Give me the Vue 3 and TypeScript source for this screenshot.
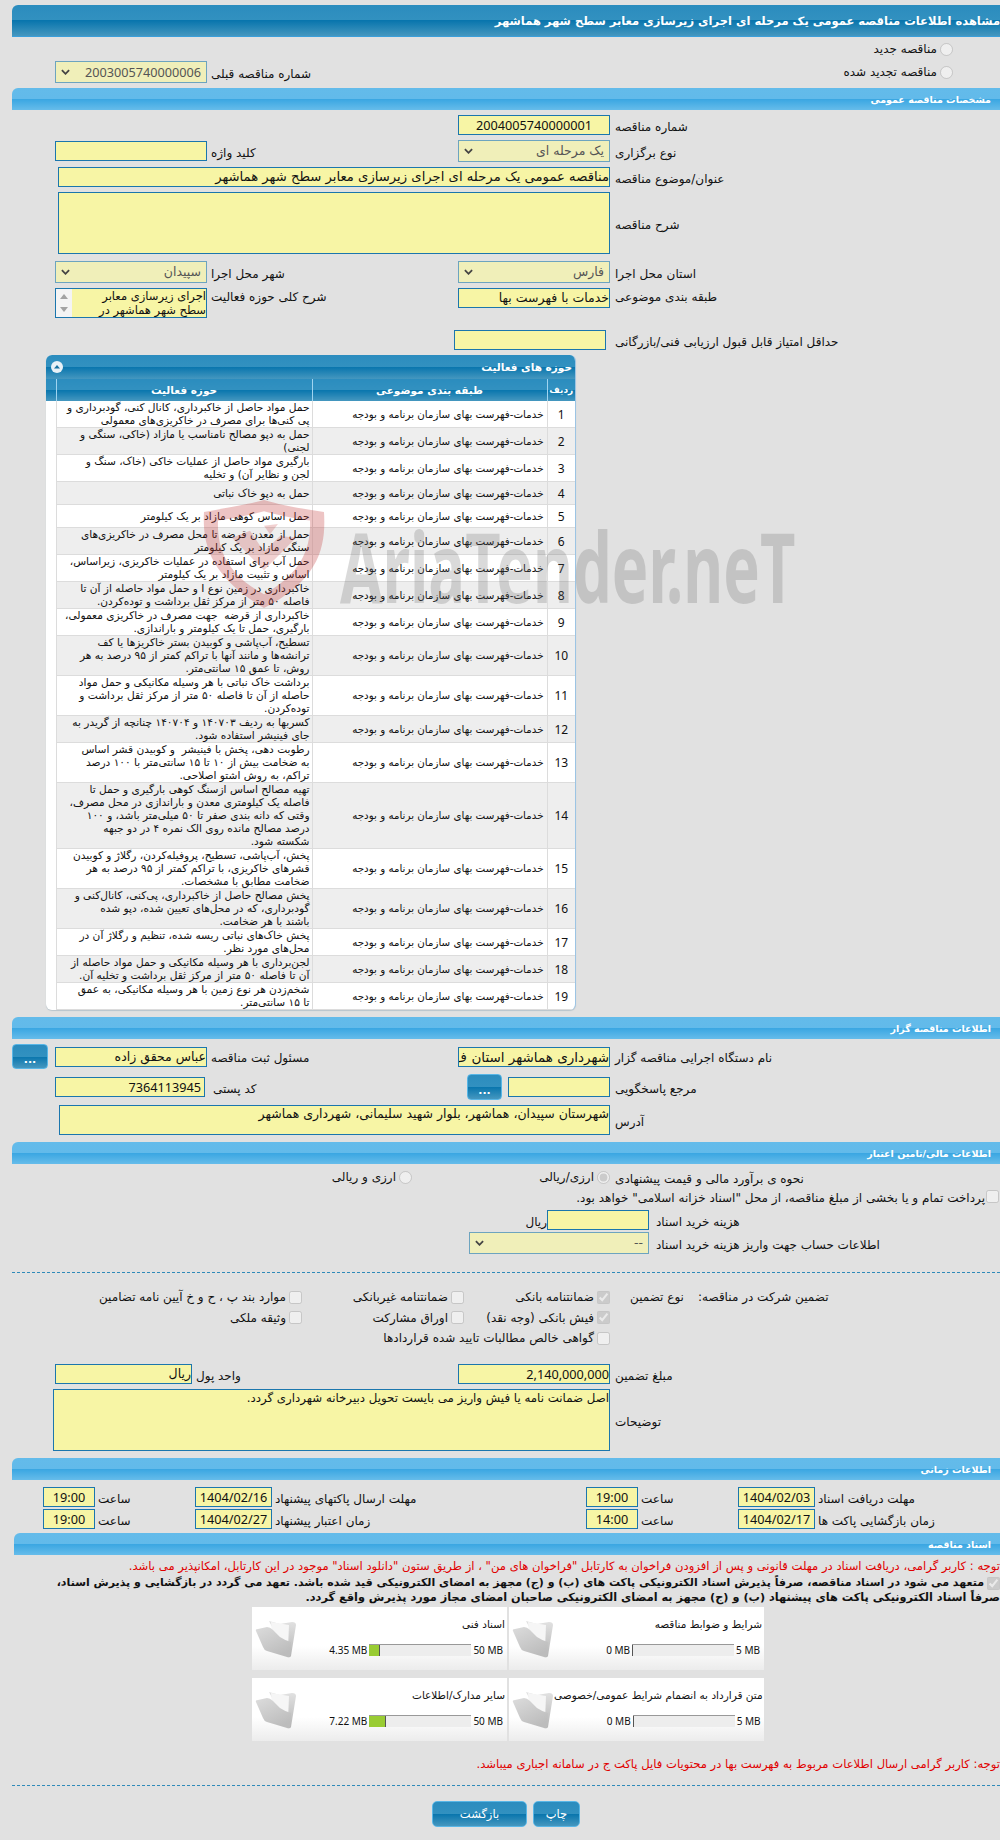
<script setup lang="ts">
const W = 'خدمات-فهرست بهای سازمان برنامه و بودجه'
const rows: string[] = [
  'حمل مواد حاصل از خاکبرداری، کانال کنی، گودبرداری و\nپی کنی‌ها برای مصرف در خاکریزی‌های معمولی',
  'حمل به دپو مصالح نامناسب یا مازاد (خاکی، سنگی و\nلجنی)',
  'بارگیری مواد حاصل از عملیات خاکی (خاک، سنگ و\nلجن و نظایر آن) و تخلیه',
  'حمل به دپو خاک نباتی',
  'حمل اساس کوهی مازاد بر یک کیلومتر',
  'حمل از معدن قرضه تا محل مصرف در خاکریزی‌های\nسنگی مازاد بر یک کیلومتر',
  'حمل آب برای استفاده در عملیات خاکریزی، زیراساس،\nاساس و تثبیت مازاد بر یک کیلومتر',
  'خاکبرداری در زمین نوع I و حمل مواد حاصله از آن تا\nفاصله ۵۰ متر از مرکز ثقل برداشت و توده‌کردن.',
  'خاکبرداری از قرضه  جهت مصرف در خاکریزی معمولی،\nبارگیری، حمل تا یک کیلومتر و باراندازی.',
  'تسطیح، آب‌پاشی و کوبیدن بستر خاکریزها یا کف\nترانشه‌ها و مانند آنها با تراکم کمتر از ۹۵ درصد به هر\nروش، تا عمق ۱۵ سانتی‌متر.',
  'برداشت خاک نباتی با هر وسیله مکانیکی و حمل مواد\nحاصله از آن تا فاصله ۵۰ متر از مرکز ثقل برداشت و\nتوده‌کردن.',
  'کسربها به ردیف ۱۴۰۷۰۳ و ۱۴۰۷۰۴ چنانچه از گریدر به\nجای فینیشر استفاده شود.',
  'رطوبت دهی، پخش با فینیشر  و کوبیدن قشر اساس\nبه ضخامت بیش از ۱۰ تا ۱۵ سانتی‌متر با ۱۰۰ درصد\nتراکم، به روش اشتو اصلاحی.',
  'تهیه مصالح اساس ازسنگ کوهی بارگیری و حمل تا\nفاصله یک کیلومتری معدن و باراندازی در محل مصرف،\nوقتی که دانه بندی صفر تا ۵۰ میلی‌متر باشد، و ۱۰۰\nدرصد مصالح مانده روی الک نمره ۴ در دو جبهه\nشکسته شود.',
  'پخش، آب‌پاشی، تسطیح، پروفیله‌کردن، رگلاژ و کوبیدن\nقشرهای خاکریزی، با تراکم کمتر از ۹۵ درصد به هر\nضخامت مطابق با مشخصات.',
  'پخش مصالح حاصل از خاکبرداری، پی‌کنی، کانال‌کنی و\nگودبرداری، که در محل‌های تعیین شده، دپو شده\nباشند با هر ضخامت.',
  'پخش خاک‌های نباتی ریسه شده، تنظیم و رگلاژ آن در\nمحل‌های مورد نظر.',
  'لجن‌برداری با هر وسیله مکانیکی و حمل مواد حاصله از\nآن تا فاصله ۵۰ متر از مرکز ثقل برداشت و تخلیه آن.',
  'شخم‌زدن هر نوع زمین با هر وسیله مکانیکی، به عمق\nتا ۱۵ سانتی‌متر.'
]
const files = [
  [
    { t: 'اسناد فنی', used: '4.35 MB', max: '50 MB', pct: 10 },
    { t: 'شرایط و ضوابط مناقصه', used: '0 MB', max: '5 MB', pct: 0 }
  ],
  [
    { t: 'سایر مدارک/اطلاعات', used: '7.22 MB', max: '50 MB', pct: 16 },
    { t: 'متن قرارداد به انضمام شرایط عمومی/خصوصی', used: '0 MB', max: '5 MB', pct: 0 }
  ]
]
</script>

<template>
  <div class="page">
    <div class="bar dark main"><span dir="rtl">مشاهده اطلاعات مناقصه عمومی یک مرحله ای اجرای زیرسازی معابر سطح شهر هماشهر</span></div>

    <div class="row rad1">
      <label class="opt" dir="rtl"><input type="radio" disabled name="a" /><span>مناقصه جدید</span></label>
    </div>
    <div class="row rad2">
      <div class="left">
        <div class="sel w152"><svg class="chev" viewBox="0 0 10 6"><path d="M1 1l4 4 4-4" /></svg><span class="num">2003005740000006</span></div>
        <div class="lbl ml4" dir="rtl">شماره مناقصه قبلی</div>
      </div>
      <label class="opt opt2" dir="rtl"><input type="radio" disabled name="a" /><span>مناقصه تجدید شده</span></label>
    </div>

    <div class="bar light mt5"><span dir="rtl">مشخصات مناقصه عمومی</span></div>

    <div class="row mt5 form">
      <div class="left"></div>
      <div class="inp w152 num c" dir="ltr">2004005740000001</div>
      <div class="lbl ml5" dir="rtl">شماره مناقصه</div>
    </div>
    <div class="row mt5 form">
      <div class="left">
        <div class="inp w152"></div>
        <div class="lbl ml4" dir="rtl">کلید واژه</div>
      </div>
      <div class="sel w152"><svg class="chev" viewBox="0 0 10 6"><path d="M1 1l4 4 4-4" /></svg><span dir="rtl">یک مرحله ای</span></div>
      <div class="lbl ml5" dir="rtl">نوع برگزاری</div>
    </div>
    <div class="row mt5 form0">
      <div class="inp w552 big" dir="rtl">مناقصه عمومی یک مرحله ای اجرای زیرسازی معابر سطح شهر هماشهر</div>
      <div class="lbl ml5" dir="rtl">عنوان/موضوع مناقصه</div>
    </div>
    <div class="row mt5 form0 mid">
      <div class="inp w552 h62"></div>
      <div class="lbl ml5" dir="rtl">شرح مناقصه</div>
    </div>
    <div class="row mt7 form">
      <div class="left">
        <div class="sel w152"><svg class="chev" viewBox="0 0 10 6"><path d="M1 1l4 4 4-4" /></svg><span dir="rtl">سپیدان</span></div>
        <div class="lbl ml4" dir="rtl">شهر محل اجرا</div>
      </div>
      <div class="sel w152"><svg class="chev" viewBox="0 0 10 6"><path d="M1 1l4 4 4-4" /></svg><span dir="rtl">فارس</span></div>
      <div class="lbl ml5" dir="rtl">استان محل اجرا</div>
    </div>
    <div class="row mt5 form top">
      <div class="left">
        <div class="listbox w152" dir="rtl">
          <div class="lb-text">اجرای زیرسازی معابر<br />سطح شهر هماشهر در</div>
          <div class="lb-scroll"><i class="up"></i><i class="down"></i></div>
        </div>
        <div class="lbl ml4 lblt" dir="rtl">شرح کلی حوزه فعالیت</div>
      </div>
      <div class="inp w152" dir="rtl">خدمات با فهرست بها</div>
      <div class="lbl ml5 lblt" dir="rtl">طبقه بندی موضوعی</div>
    </div>
    <div class="row mt12 form-min">
      <div class="inp w152"></div>
      <div class="lbl minlbl" dir="rtl">حداقل امتیاز قابل قبول ارزیابی فنی/بازرگانی</div>
    </div>

    <div class="card mt5">
      <div class="card-head">
        <span class="toggle"><svg viewBox="0 0 12 12"><circle cx="6" cy="6" r="6" fill="#e8f1f7" /><path d="M3 7.4L6 4l3 3.4z" fill="#17709f" /></svg></span>
        <span dir="rtl">حوزه های فعالیت</span>
      </div>
      <table dir="ltr">
        <colgroup><col class="c0" /><col class="c1" /><col class="c2" /><col class="c3" /></colgroup>
        <thead>
          <tr><th></th><th dir="rtl">حوزه فعالیت</th><th dir="rtl">طبقه بندی موضوعی</th><th class="th-idx" dir="rtl">ردیف</th></tr>
        </thead>
        <tbody>
          <tr v-for="(r, i) in rows" :key="i" :class="{ alt: i % 2 === 1 }">
            <td class="blank"></td>
            <td class="act" dir="rtl">{{ r }}</td>
            <td class="cat" dir="rtl">{{ W }}</td>
            <td class="idx">{{ i + 1 }}</td>
          </tr>
        </tbody>
      </table>
    </div>

    <div class="bar light mt7"><span dir="rtl">اطلاعات مناقصه گزار</span></div>

    <div class="row mt5 btnrow">
      <div class="left wide-left">
        <button class="dots d1">...</button>
        <div class="inp w152 ml7" dir="rtl">عباس محقق زاده</div>
        <div class="lbl ml4" dir="rtl">مسئول ثبت مناقصه</div>
      </div>
      <div class="inp w152 clip" dir="rtl">شهرداری هماشهر استان ف</div>
      <div class="lbl ml5" dir="rtl">نام دستگاه اجرایی مناقصه گزار</div>
    </div>
    <div class="row mt5 btnrow h26">
      <div class="left post">
        <div class="inp w150 num2" dir="ltr">7364113945</div>
        <div class="lbl ml8" dir="rtl">کد پستی</div>
      </div>
      <button class="dots d2">...</button>
      <div class="inp w102"></div>
      <div class="lbl ml5" dir="rtl">مرجع پاسخگویی</div>
    </div>
    <div class="row mt5 addr mid">
      <div class="inp w551 h30 tall" dir="rtl">شهرستان سپیدان، هماشهر، بلوار شهید سلیمانی، شهرداری هماشهر</div>
      <div class="lbl ml5" dir="rtl">آدرس</div>
    </div>

    <div class="bar light mt7"><span dir="rtl">اطلاعات مالی/تامین اعتبار</span></div>

    <div class="row finr">
      <label class="opt o3" dir="rtl"><input type="radio" disabled name="b" /><span>ارزی و ریالی</span></label>
      <label class="opt o4" dir="rtl"><input type="radio" disabled checked name="b" /><span>ارزی/ریالی</span></label>
      <div class="lbl ml5" dir="rtl">نحوه ی برآورد مالی و قیمت پیشنهادی</div>
    </div>
    <div class="row chk1" dir="rtl">
      <input type="checkbox" disabled />
      <span class="lbl">پرداخت تمام و یا بخشی از مبلغ مناقصه، از محل "اسناد خزانه اسلامی" خواهد بود.</span>
    </div>
    <div class="row cost">
      <div class="lbl" dir="rtl">ریال</div>
      <div class="inp w102"></div>
      <div class="lbl ml7" dir="rtl">هزینه خرید اسناد</div>
    </div>
    <div class="row mt2 acc">
      <div class="sel w180"><svg class="chev" viewBox="0 0 10 6"><path d="M1 1l4 4 4-4" /></svg><span dir="rtl">--</span></div>
      <div class="lbl ml7" dir="rtl">اطلاعات حساب جهت واریز هزینه خرید اسناد</div>
    </div>

    <div class="dash d-a"></div>

    <div class="guar">
      <div class="guar-grid" dir="rtl">
        <label class="ck"><input type="checkbox" disabled checked /><span>ضمانتنامه بانکی</span></label>
        <label class="ck"><input type="checkbox" disabled /><span>ضمانتنامه غیربانکی</span></label>
        <label class="ck"><input type="checkbox" disabled /><span>موارد بند پ ، ح و خ آیین نامه تضامین</span></label>
        <label class="ck"><input type="checkbox" disabled checked /><span>فیش بانکی (وجه نقد)</span></label>
        <label class="ck"><input type="checkbox" disabled /><span>اوراق مشارکت</span></label>
        <label class="ck"><input type="checkbox" disabled /><span>وثیقه ملکی</span></label>
        <label class="ck wide"><input type="checkbox" disabled /><span>گواهی خالص مطالبات تایید شده قراردادها</span></label>
      </div>
      <div class="lbl g1" dir="rtl">نوع تضمین</div>
      <div class="lbl g2" dir="rtl">تضمین شرکت در مناقصه:</div>
    </div>

    <div class="row form amt">
      <div class="left">
        <div class="inp w137" dir="rtl">ریال</div>
        <div class="lbl ml4" dir="rtl">واحد پول</div>
      </div>
      <div class="inp w152 num3" dir="ltr">2,140,000,000</div>
      <div class="lbl ml5" dir="rtl">مبلغ تضمین</div>
    </div>
    <div class="row mt5 desc mid">
      <div class="inp w557 h62 tall small" dir="rtl">اصل ضمانت نامه یا فیش واریز می بایست تحویل دبیرخانه شهرداری گردد.</div>
      <div class="lbl ml5" dir="rtl">توضیحات</div>
    </div>

    <div class="bar light mt7"><span dir="rtl">اطلاعات زمانی</span></div>

    <div class="times t1">
      <div class="inp num4 c" dir="ltr">19:00</div><div class="lbl ml3" dir="rtl">ساعت</div>
      <div class="inp num4 c" dir="ltr">1404/02/16</div><div class="lbl ml3" dir="rtl">مهلت ارسال پاکتهای پیشنهاد</div>
      <div class="inp num4 c" dir="ltr">19:00</div><div class="lbl ml3" dir="rtl">ساعت</div>
      <div class="inp num4 c" dir="ltr">1404/02/03</div><div class="lbl ml3" dir="rtl">مهلت دریافت اسناد</div>
    </div>
    <div class="times t2">
      <div class="inp num4 c" dir="ltr">19:00</div><div class="lbl ml3" dir="rtl">ساعت</div>
      <div class="inp num4 c" dir="ltr">1404/02/27</div><div class="lbl ml3" dir="rtl">زمان اعتبار پیشنهاد</div>
      <div class="inp num4 c" dir="ltr">14:00</div><div class="lbl ml3" dir="rtl">ساعت</div>
      <div class="inp num4 c" dir="ltr">1404/02/17</div><div class="lbl ml3" dir="rtl">زمان بازگشایی پاکت ها</div>
    </div>

    <div class="bar light docs"><span dir="rtl">اسناد مناقصه</span></div>

    <div class="red n1" dir="rtl">توجه : کاربر گرامی، دریافت اسناد در مهلت قانونی و پس از افزودن فراخوان به کارتابل "فراخوان های من" ، از طریق ستون "دانلود اسناد" موجود در این کارتابل، امکانپذیر می باشد.</div>
    <div class="pledge" dir="rtl">
      <input type="checkbox" disabled checked />
      <b>متعهد می شود در اسناد مناقصه، صرفاً پذیرش اسناد الکترونیکی پاکت های (ب) و (ج) مجهز به امضای الکترونیکی قید شده باشد. تعهد می گردد در بازگشایی و پذیرش اسناد، <br /><span class="l2">صرفاً اسناد الکترونیکی پاکت های پیشنهاد (ب) و (ج) مجهز به امضای الکترونیکی صاحبان امضای مجاز مورد پذیرش واقع گردد.</span></b>
    </div>

    <div class="files">
      <div v-for="(line, li) in files" :key="li" class="file-line">
        <div v-for="f in line" :key="f.t" class="file">
          <svg class="folder" viewBox="0 0 42 38">
            <defs>
              <linearGradient id="fb" x1="0" y1="0" x2="0" y2="1"><stop offset="0" stop-color="#e2e2e2" /><stop offset="1" stop-color="#b5b5b5" /></linearGradient>
              <linearGradient id="ff" x1="0" y1="0" x2="0.6" y2="1"><stop offset="0" stop-color="#dcdcdc" /><stop offset="1" stop-color="#bcbcbc" /></linearGradient>
            </defs>
            <path d="M14 1l11 3 12-2q4 0 4 3l-5 31q-1 2-3 1z" fill="url(#fb)" />
            <path d="M16 2l18 3-1 24-16-14z" fill="#f6f6f6" />
            <path d="M1 11q-1-2 2-2l9-2q3 0 6 3l7 7q6 4 11 5l-1 14q-1 2-3 1L12 31q-3-1-4-4z" fill="url(#ff)" />
          </svg>
          <div class="file-body">
            <div class="file-title" dir="rtl">{{ f.t }}</div>
            <div class="file-meter">
              <span class="mb u">{{ f.used }}</span>
              <span class="track"><span class="fill" :style="{ width: f.pct + '%' }"></span></span>
              <span class="mb">{{ f.max }}</span>
            </div>
          </div>
        </div>
      </div>
    </div>

    <div class="red n2" dir="rtl">توجه: کاربر گرامی ارسال اطلاعات مربوط به فهرست بها در محتویات فایل پاکت ج در سامانه اجباری میباشد.</div>

    <div class="dash d-b"></div>

    <div class="actions">
      <button class="act-btn back">بازگشت</button>
      <button class="act-btn print">چاپ</button>
    </div>

    <div class="wm" aria-hidden="true">
      <svg class="shield" viewBox="0 0 124 126" preserveAspectRatio="none">
        <path fill-rule="evenodd" d="M2 14C30 8 50 4 62 0c14 5 36 10 60 14 2 40-4 78-60 112C10 90 0 54 2 14zM16 24c-1 32 8 62 46 86 38-25 47-54 46-86C90 21 74 17 62 13 50 17 34 21 16 24z" fill="#c43c3c" opacity=".3" />
        <path d="M30 44l18-8 14 24 16-18 16 2-32 38zM62 30l14-2-8 12z" fill="#c43c3c" opacity=".24" />
      </svg>
      <span class="wm-text">AriaTender.neT</span>
    </div>
  </div>
</template>

<style>
html, body { margin: 0; padding: 0; background: #e1e1e1; }
</style>

<style scoped>
.page {
  position: relative;
  width: 1000px;
  height: 1840px;
  overflow: hidden;
  padding-top: 5px;
  box-sizing: border-box;
  background: #e1e1e1;
  font-family: "DejaVu Sans", sans-serif;
  font-size: 12px;
  color: #111;
}
.bar {
  margin-left: 12px;
  height: 22px;
  box-sizing: border-box;
  border-radius: 6px 0 0 0;
  display: flex;
  justify-content: flex-end;
  align-items: center;
  padding-right: 9px;
  color: #fff;
  font-weight: bold;
  font-size: 9.5px;
}
.bar.light {
  background: linear-gradient(#63bbea 0, #62baea 50%, #39a6e2 50%, #66bcea 100%);
}
.bar.dark, .card-head, thead th, .dots, .act-btn {
  background: linear-gradient(#2b8cbe 0, #3291c0 50%, #0875ad 50%, #4597bf 100%);
}
.bar.main {
  height: 32px;
  font-size: 11.5px;
  padding-right: 0;
  border-bottom: 1px solid #3a9fdb;
  white-space: nowrap;
}
.mt2 { margin-top: 2px; }
.mt5 { margin-top: 5px; }
.mt7 { margin-top: 7px; }
.mt12 { margin-top: 12px; }
.ml3 { margin-left: 3px; }
.ml4 { margin-left: 4px; }
.ml5 { margin-left: 5px; }
.ml7 { margin-left: 7px; }
.ml8 { margin-left: 8px; }

.row { display: flex; align-items: center; }
.top { align-items: flex-start; }
.form { padding-left: 55px; }
.form0 { padding-left: 58px; }
.form-min { padding-left: 454px; }
.left { width: 403px; display: flex; align-items: center; flex: none; }
.top .left { align-items: flex-start; }
.lbl { white-space: nowrap; line-height: 16px; text-align: left; padding-top: 3px; }
.lblt { padding-top: 1px; }
.minlbl { margin-left: 9px; }

.rad1 { height: 24px; justify-content: flex-end; padding-right: 47px; }
.rad2 { height: 22px; padding-left: 55px; }
.rad2 .left { width: auto; }
.opt { display: flex; align-items: center; gap: 3px; white-space: nowrap; }
.opt input { margin: 0; width: 13px; height: 13px; }
.opt2 { margin-left: auto; margin-right: 47px; }

.inp, .sel {
  box-sizing: border-box;
  background: #f7f5a5;
  border: 1px solid #1b76ad;
  height: 20px;
  line-height: 18px;
  font-size: 12.5px;
  white-space: nowrap;
  overflow: hidden;
  flex: none;
  text-align: right;
}
.big { font-size: 13.2px; }
.small { font-size: 11.8px !important; }
.clip { font-size: 13.5px; }
.sel {
  height: 22px;
  line-height: 20px;
  background: #f0efb9;
  border-color: #6da4bf;
  color: #555;
  display: flex;
  justify-content: flex-end;
  padding: 0 5px;
  position: relative;
}
.chev { width: 9px; height: 6px; margin-right: auto; align-self: center; }
.chev path { fill: none; stroke: #444; stroke-width: 2; }
.w102 { width: 102px; }
.w137 { width: 137px; }
.w150 { width: 150px; }
.w152 { width: 152px; }
.w180 { width: 180px; }
.w551 { width: 551px; }
.w552 { width: 552px; }
.w557 { width: 557px; }
.h62 { height: 62px; }
.h30 { height: 30px; }
.tall { white-space: pre-wrap; line-height: 16px; }
.num { font-family: "Noto Sans", sans-serif; font-size: 12.7px; }
.c { text-align: center; }
.num2 { font-family: "Noto Sans", sans-serif; font-size: 12.7px; padding-right: 3px; }
.num3 { font-family: "Noto Sans", sans-serif; font-size: 12.7px; }
.num4 { font-family: "Noto Sans", sans-serif; font-size: 12.7px; }
.mid { align-items: center; }

.listbox {
  box-sizing: border-box;
  height: 30px;
  border: 1px solid #1b76ad;
  background: #f7f5a5;
  display: flex;
  overflow: hidden;
  flex: none;
}
.lb-text { flex: 1; font-size: 11.5px; line-height: 14px; white-space: nowrap; overflow: hidden; }
.lb-scroll {
  width: 16px;
  background: #f4f4f4;
  display: flex;
  flex-direction: column;
  justify-content: space-between;
  align-items: center;
  padding: 5px 0;
}
.lb-scroll i { width: 0; height: 0; border-left: 4px solid transparent; border-right: 4px solid transparent; }
.lb-scroll .up { border-bottom: 5px solid #a3a3a3; }
.lb-scroll .down { border-top: 5px solid #a3a3a3; }

.card {
  margin-left: 46px;
  width: 530px;
  border-radius: 6px;
  overflow: hidden;
  background: #fff;
  box-shadow: 0 1px 1px #b9c5cc;
  box-sizing: border-box;
  border-right: 1px solid #9cc4e4;
}
.card-head {
  height: 24px;
  display: flex;
  justify-content: space-between;
  align-items: center;
  padding: 0 3px 0 5px;
  color: #fff;
  font-weight: bold;
  font-size: 10.5px;
}
.toggle { display: flex; }
.toggle svg { width: 12px; height: 12px; }
table { border-collapse: collapse; table-layout: fixed; width: 529px; }
.c0 { width: 10px; }
.c1 { width: 256px; }
.c2 { width: 235px; }
.c3 { width: 28px; }
thead th {
  height: 22px;
  padding: 0;
  border-left: 1px solid #9fd4f0;
  color: #fff;
  font-size: 10.5px;
  font-weight: bold;
  text-align: center;
}
thead th:first-child { border-left: 0; }
thead th.th-idx { font-size: 9px; }
tbody td {
  padding: 0;
  line-height: 13px;
  font-size: 10.3px;
  border-bottom: 1px solid #dcdcdc;
  border-left: 1px solid #dcdcdc;
  vertical-align: middle;
}
tbody tr { height: 23px; }
tbody tr.alt td { background: #eee; }
tbody tr.alt td.blank { background: #fff; }
td.blank { border-left: 0 !important; border-bottom: 0 !important; }
tbody td.act { white-space: pre; text-align: right; padding-right: 2px; overflow: hidden; font-size: 10.6px; }
td.cat { text-align: right; padding-right: 3px; white-space: nowrap; overflow: hidden; }
tbody td.idx { text-align: center; font-family: "Noto Sans", sans-serif; font-size: 12px; }

.btnrow { padding-left: 12px; height: 25px; }
.wide-left { width: 446px; }
.h26 { height: 26px; padding-left: 55px; }
.dots {
  border: 1px solid #58b6e6;
  border-radius: 4px;
  color: #fff;
  font-weight: bold;
  font-size: 11px;
  padding: 6px 0 0;
  font-family: "DejaVu Sans", sans-serif;
  box-sizing: border-box;
}
.d1 { width: 36px; height: 25px; flex: none; }
.d2 { width: 35px; height: 26px; margin-left: 9px; margin-right: 6px; flex: none; }
.addr { padding-left: 59px; }
.desc { padding-left: 53px; }

.finr { padding-left: 336px; height: 18px; margin-top: 4px; }
.o3 { width: 76px; flex: none; }
.o4 { margin-left: 128px; width: 70px; flex: none; }
.chk1 { height: 20px; padding-right: 1px; gap: 1px; }
.chk1 input { margin: 0; width: 13px; height: 13px; }
.cost { padding-left: 527px; height: 20px; margin-top: 4px; }
.cost .lbl:first-child { width: 20px; }
.acc { padding-left: 469px; }

.dash { border-top: 1px dashed #2f8ab9; margin-left: 12px; }
.d-a { margin-top: 18px; }
.d-b { margin-top: 13px; }

.guar { display: flex; margin-top: 14px; align-items: flex-start; }
.guar-grid {
  width: 610px;
  flex: none;
  display: grid;
  grid-template-columns: 146px 162px 1fr;
  grid-auto-rows: 20.5px;
  align-items: center;
}
.ck { display: flex; align-items: center; gap: 3px; white-space: nowrap; }
.ck input { margin: 0; width: 13px; height: 13px; }
.wide { grid-column: 1 / -1; }
.g1 { margin-left: 20px; width: 68px; flex: none; line-height: 20px; padding-top: 0; }
.g2 { line-height: 20px; padding-top: 0; }

.amt { margin-top: 15.5px; }

.times {
  display: grid;
  grid-template-columns: 52px 100px 77px 314px 52px 100px 77px 1fr;
  padding-left: 43px;
  align-items: center;
}
.t1 { margin-top: 7px; }
.t2 { margin-top: 2px; }
.docs { margin-left: 14px; margin-top: 4px; }

.red { color: #e00000; white-space: nowrap; text-align: right; line-height: 16px; font-size: 11.6px; }
.n1 { margin-top: 3px; }
.n2 { margin-top: 15px; }
.pledge { line-height: 15px; white-space: nowrap; margin-top: 1px; font-size: 11px; }
.pledge input { margin: 0 0 0 3px; width: 13px; height: 13px; vertical-align: middle; }
.l2 { font-size: 11.3px; }

.files { padding-left: 252px; margin-top: 2px; }
.file-line { display: flex; gap: 2px; margin-bottom: 8px; }
.file {
  width: 255px;
  height: 63px;
  box-sizing: border-box;
  background: linear-gradient(#fff 0, #fff 62%, #ececec 100%);
  display: flex;
  padding: 13px 2px 0 3px;
  flex: none;
}
.folder { width: 42px; height: 38px; flex: none; }
.file-body { flex: 1; display: flex; flex-direction: column; align-items: flex-end; }
.file-title { font-size: 10.5px; line-height: 13px; margin-top: -2px; white-space: nowrap; }
.file-meter { display: flex; align-items: center; gap: 2px; margin-top: 13px; padding-right: 2px; }
.mb { font-family: "Noto Sans", sans-serif; font-size: 10px; line-height: 12px; }
.track {
  width: 102px;
  height: 12px;
  box-sizing: border-box;
  background: #ededed;
  border-top: 1px solid #999;
  display: block;
}
.fill { display: block; height: 100%; background: #99cc33; border-right: 1px solid #555; box-sizing: border-box; }

.actions { display: flex; padding-left: 432px; gap: 6px; margin-top: 15px; }
.act-btn {
  border: 1px solid #58b6e6;
  border-radius: 5px;
  color: #fff;
  font-size: 11.5px;
  height: 26px;
  box-sizing: border-box;
  font-family: "DejaVu Sans", sans-serif;
  padding: 0;
}
.back { width: 95px; }
.print { width: 47px; }

.wm { position: absolute; left: 0; top: 0; width: 1000px; height: 700px; pointer-events: none; }
.shield { position: absolute; left: 202px; top: 500px; width: 124px; height: 108px; overflow: visible; }
.wm-text {
  position: absolute;
  left: 340px;
  top: 501px;
  font-family: "Noto Sans", sans-serif;
  font-weight: 700;
  font-size: 96px;
  line-height: 130px;
  color: #646464;
  opacity: .23;
  transform: scaleX(.64);
  transform-origin: left top;
  white-space: nowrap;
}
</style>
